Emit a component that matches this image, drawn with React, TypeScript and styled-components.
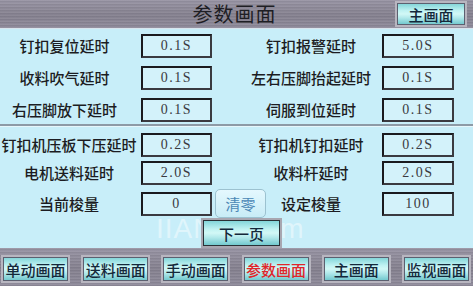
import React from "react";
import styled, { createGlobalStyle, css } from "styled-components";

const GlobalStyle = createGlobalStyle`
  html, body {
    margin: 0;
    padding: 0;
  }
  body {
    font-family: "Noto Sans CJK SC", "Noto Sans", sans-serif;
  }
`;

type Param = { label: string; value: string };

const section1: [Param, Param][] = [
  [
    { label: "钉扣复位延时", value: "0.1S" },
    { label: "钉扣报警延时", value: "5.0S" },
  ],
  [
    { label: "收料吹气延时", value: "0.1S" },
    { label: "左右压脚抬起延时", value: "0.1S" },
  ],
  [
    { label: "右压脚放下延时", value: "0.1S" },
    { label: "伺服到位延时", value: "0.1S" },
  ],
];

const section2: [Param, Param][] = [
  [
    { label: "钉扣机压板下压延时", value: "0.2S" },
    { label: "钉扣机钉扣延时", value: "0.2S" },
  ],
  [
    { label: "电机送料延时", value: "2.0S" },
    { label: "收料杆延时", value: "2.0S" },
  ],
];

const navItems = ["单动画面", "送料画面", "手动画面", "参数画面", "主画面", "监视画面"];

export default function App() {
  return (
    <>
      <GlobalStyle />
      <Screen>
        <Header>
          <span />
          <Title>参数画面</Title>
          <HeaderButton type="button">主画面</HeaderButton>
        </Header>
        <Main>
          <Watermark>IIANet.com</Watermark>
          <Section $gap={8}>
            {section1.map(([l, r]) => (
              <Row key={l.label}>
                <Label $pad={12}>{l.label}</Label>
                <ValueBox>{l.value}</ValueBox>
                <Label $col={4}>{r.label}</Label>
                <ValueBox $col={5}>{r.value}</ValueBox>
              </Row>
            ))}
          </Section>
          <Divider />
          <Section $gap={4} $top={6}>
            {section2.map(([l, r]) => (
              <Row key={l.label}>
                <Label $pad={3}>{l.label}</Label>
                <ValueBox>{l.value}</ValueBox>
                <Label $col={4}>{r.label}</Label>
                <ValueBox $col={5}>{r.value}</ValueBox>
              </Row>
            ))}
            <Row>
              <Label $pad={3}>当前梭量</Label>
              <ValueBox>0</ValueBox>
              <ClearButton type="button">清零</ClearButton>
              <Label $col={4}>设定梭量</Label>
              <ValueBox $col={5}>100</ValueBox>
            </Row>
          </Section>
          <PageRow>
            <NextButton type="button">下一页</NextButton>
          </PageRow>
        </Main>
        <NavBar>
          {navItems.map((item) => (
            <NavButton key={item} type="button" $active={item === "参数画面"}>
              {item}
            </NavButton>
          ))}
        </NavBar>
      </Screen>
    </>
  );
}

const metal = css`
  background:
    repeating-linear-gradient(
      to bottom,
      rgba(255, 255, 255, 0.06) 0px,
      rgba(255, 255, 255, 0.06) 1px,
      rgba(0, 0, 0, 0.05) 1px,
      rgba(0, 0, 0, 0.05) 2px,
      transparent 2px,
      transparent 3px
    ),
    linear-gradient(to bottom, #9894a4, #85818f 55%, #8f8b9b);
`;

const tealButton = css`
  box-sizing: border-box;
  border: 2px solid #b8b6c0;
  outline: 1px solid #5c6070;
  outline-offset: -3px;
  background: linear-gradient(
    to bottom,
    #7cd2d6 0%,
    #c0f2f2 35%,
    #d2f8f6 50%,
    #b0e8ea 68%,
    #6ac4ca 100%
  );
  font-family: "Noto Sans CJK SC", sans-serif;
  font-size: 15px;
  font-weight: 500;
  color: #14283a;
  padding: 0;
  cursor: pointer;
`;

const Screen = styled.div`
  width: 473px;
  height: 286px;
  display: flex;
  flex-direction: column;
  overflow: hidden;
`;

const Header = styled.div`
  ${metal};
  height: 29px;
  box-sizing: border-box;
  border-bottom: 1px solid #d8e6ee;
  display: grid;
  grid-template-columns: 1fr auto 1fr;
  align-items: center;
`;

const Title = styled.div`
  font-size: 20px;
  color: #1e1e24;
  letter-spacing: 1px;
  padding-right: 4px;
  line-height: 28px;
`;

const HeaderButton = styled.button`
  ${tealButton};
  justify-self: end;
  align-self: start;
  margin: 1px 6px 0 0;
  width: 72px;
  height: 26px;
`;

const Main = styled.div`
  position: relative;
  flex: 1;
  background: #c8eef9;
  padding-top: 5px;
  display: flex;
  flex-direction: column;
`;

const Section = styled.div<{ $gap: number; $top?: number }>`
  position: relative;
  display: flex;
  flex-direction: column;
  gap: ${(p) => p.$gap}px;
  margin-top: ${(p) => p.$top ?? 0}px;
`;

const Row = styled.div`
  display: grid;
  grid-template-columns: 141px 71px 28px 142px 72px;
  height: 24px;
  align-items: center;
`;

const Label = styled.div<{ $pad?: number; $col?: number }>`
  grid-column: ${(p) => p.$col ?? 1};
  grid-row: 1;
  text-align: center;
  padding-right: ${(p) => p.$pad ?? 0}px;
  font-size: 15px;
  font-weight: 500;
  color: #1c1c22;
  white-space: nowrap;
  line-height: 24px;
`;

const ValueBox = styled.div<{ $col?: number }>`
  grid-column: ${(p) => p.$col ?? 2};
  grid-row: 1;
  box-sizing: border-box;
  height: 24px;
  border: 2px solid #1a1a1e;
  border-right-color: #3a3a40;
  border-bottom-color: #3a3a40;
  background: #d3f2fa;
  display: flex;
  align-items: center;
  justify-content: center;
  font-family: "Liberation Serif", "DejaVu Serif", serif;
  font-size: 14px;
  letter-spacing: 1.5px;
  color: #3a3a40;
`;

const ClearButton = styled.button`
  grid-column: 3 / 5;
  grid-row: 1;
  justify-self: start;
  margin-left: 3px;
  width: 51px;
  height: 29px;
  box-sizing: border-box;
  border: 1px solid #9cc2d0;
  border-radius: 5px;
  background: linear-gradient(to bottom, #e4f8fe, #c8ecf6);
  font-family: "Noto Sans CJK SC", sans-serif;
  font-size: 15px;
  color: #4c88b6;
  padding: 0;
  cursor: pointer;
`;

const Divider = styled.div`
  position: relative;
  height: 2px;
  margin-top: 2px;
  background: #8d9aa6;
  border-bottom: 1px solid #e6f6fb;
`;

const PageRow = styled.div`
  position: relative;
  display: flex;
  margin-top: auto;
  padding-left: 201px;
`;

const NextButton = styled.button`
  ${tealButton};
  width: 81px;
  height: 30px;
  border-color: #a8a6b0;
  outline-color: #2a3036;
`;

const Watermark = styled.div`
  position: absolute;
  left: 156px;
  top: 184px;
  font-family: "Liberation Sans", sans-serif;
  font-size: 28px;
  color: rgba(255, 255, 255, 0.45);
  pointer-events: none;
  letter-spacing: 1px;
  z-index: 0;
`;

const NavBar = styled.div`
  ${metal};
  height: 38px;
  box-sizing: border-box;
  padding: 7px 2px 3px 1px;
  display: flex;
  justify-content: space-between;
`;

const NavButton = styled.button<{ $active?: boolean }>`
  ${tealButton};
  width: 69px;
  height: 28px;
  color: ${(p) => (p.$active ? "#e0262a" : "#14283a")};
`;
